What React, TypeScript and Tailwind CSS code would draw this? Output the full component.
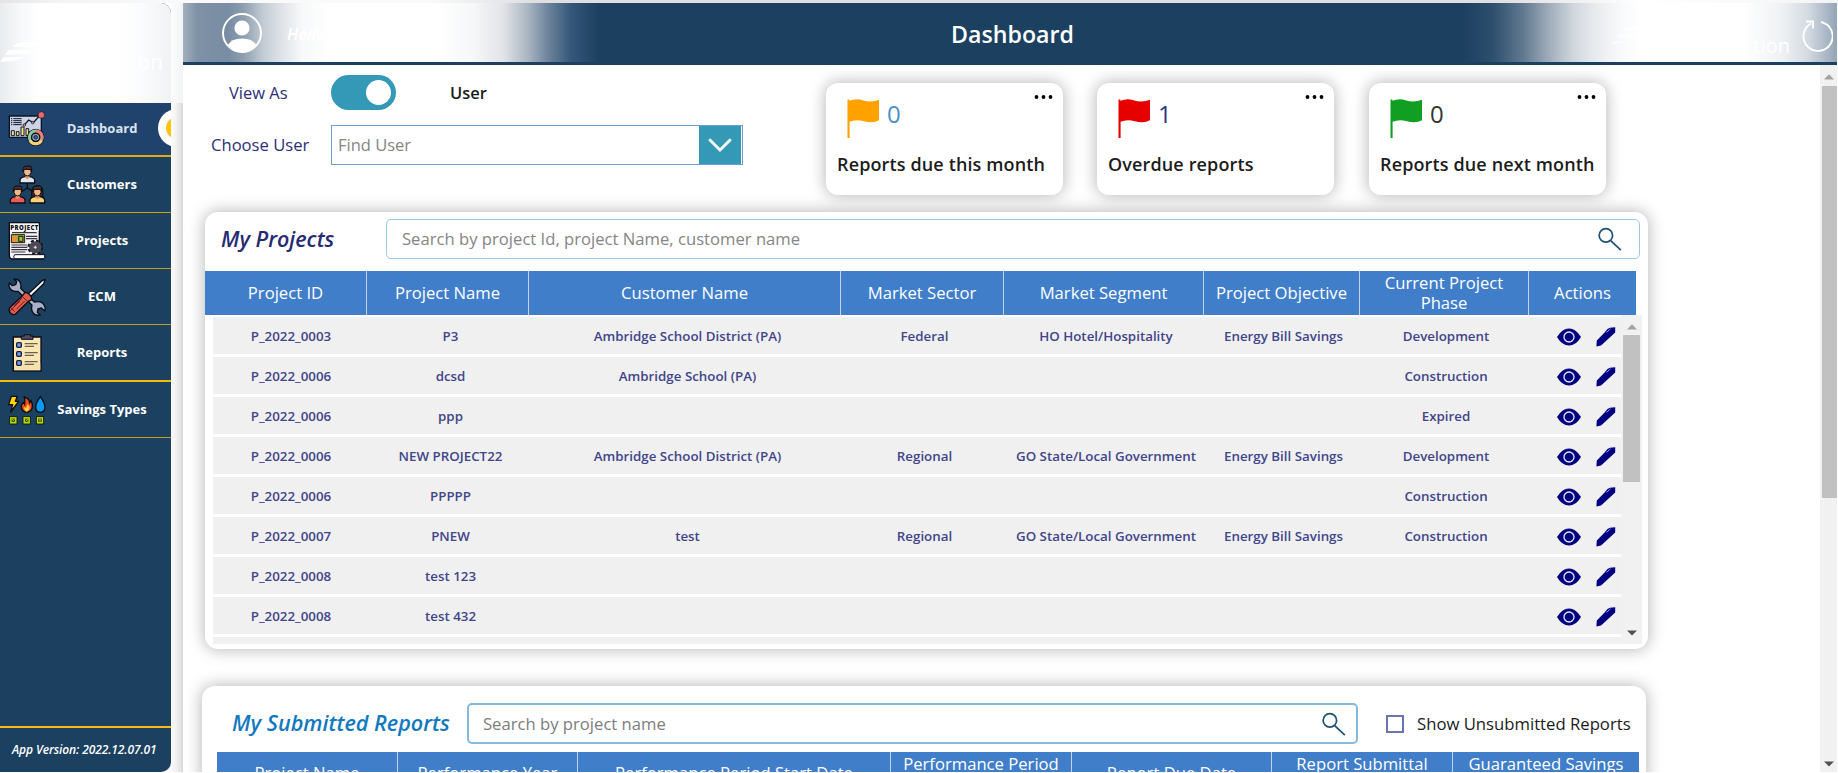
import React from "react";

const shadow = "shadow-[0_0_16px_1px_rgba(0,0,0,0.28)]";

function DashboardIcon() {
  return (
    <svg width="38" height="38" viewBox="24 28 114 114" className="shrink-0">
      <path d="M28 46H124V110H28Z" fill="#ccd4ea" stroke="#0d1420" strokeWidth="4" />
      <path d="M33 54H37M40 54H65M33 60H37M40 60H65M33 66H37M40 66H65M33 72H37M40 72H65" stroke="#111827" strokeWidth="3" />
      <path d="M72 74L86 58L100 66L118 46" fill="none" stroke="#0d1420" strokeWidth="4" />
      <circle cx="73" cy="73" r="4" fill="#e8807c" stroke="#0d1420" strokeWidth="2" />
      <circle cx="98" cy="66" r="4" fill="#e8807c" stroke="#0d1420" strokeWidth="2" />
      <circle cx="124" cy="43" r="10" fill="#e8686c" stroke="#0d1420" strokeWidth="2" />
      <path d="M34 90H43V105H34ZM49 93H57V105H49ZM63 79H72V105H63ZM78 84H86V105H78Z" fill="#ffe08a" stroke="#0d1420" strokeWidth="3" />
      <circle cx="107" cy="110" r="26" fill="#0d1420" />
      <circle cx="107" cy="110" r="19" fill="none" stroke="#8fc79a" strokeWidth="9" />
      <path d="M107 91A19 19 0 0 1 124 119" fill="none" stroke="#ea7d78" strokeWidth="9" />
      <path d="M124 119A19 19 0 0 1 90 119" fill="none" stroke="#f4d27a" strokeWidth="9" />
      <circle cx="107" cy="110" r="12" fill="#aab6d4" stroke="#0d1420" strokeWidth="4" />
      <circle cx="107" cy="110" r="6" fill="#33588c" stroke="#0d1420" strokeWidth="2" />
    </svg>
  );
}

function Person({ x, y, shirt, long }: { x: number; y: number; shirt: string; long?: boolean }) {
  return (
    <g transform={`translate(${x} ${y})`}>
      {long && <path d="M-17 38V18Q-17 0 0 0Q17 0 17 18V38Z" fill="#3a2430" stroke="#0d0d14" strokeWidth="3" />}
      <path d="M-22 52V44Q-22 36 -8 33H8Q22 36 22 44V52Z" fill={shirt} stroke="#0d0d14" strokeWidth="4" />
      <path d="M-6 26H6V36L0 41L-6 36Z" fill="#dd9a62" />
      <path d="M-11 10H11V20Q10 31 0 31Q-10 31 -11 20Z" fill="#f3b680" stroke="#0d0d14" strokeWidth="3" />
      <path d="M-13 18V8Q-12 1 0 1H10Q14 4 13 18L10 11H-9Z" fill="#4b2f38" stroke="#0d0d14" strokeWidth="3" />
    </g>
  );
}

function CustomersIcon() {
  return (
    <svg width="38" height="40" viewBox="24 195 114 120" className="shrink-0">
      <path d="M82 246V264M54 282L82 264L112 282" fill="none" stroke="#0d0d14" strokeWidth="4" />
      <Person x={82} y={197} shirt="#dbe6f5" />
      <Person x={53} y={257} shirt="#ee5a5a" />
      <Person x={112} y={257} shirt="#fbd27a" long />
    </svg>
  );
}

function ProjectsIcon() {
  return (
    <svg width="38" height="40" viewBox="24 362 114 120" className="shrink-0">
      <path d="M28 367H118V462H132Q136 470 131 476H36Q28 476 28 464Z" fill="#f6f3f8" stroke="#0d0d14" strokeWidth="4" />
      <path d="M30 373H116V391H30Z" fill="#fff" />
      <text x="73" y="390" textAnchor="middle" textLength="84" fontSize="18" fontWeight="800" fontFamily="Open Sans, sans-serif" fill="#0d0d14">PROJECT</text>
      <path d="M36 397H110M78 408H112M78 415H112M34 434H82M34 441H82M34 448H82M34 455H76" stroke="#3a3640" strokeWidth="3.5" />
      <path d="M34 403H74V427H34Z" fill="#b7ab3c" stroke="#1c1a10" strokeWidth="3" />
      <path d="M37 410H50V424H37Z" fill="#f08a3c" />
      <path d="M56 408H69V423H56Z" fill="#8cc63f" stroke="#1c1a10" strokeWidth="3" />
      <circle cx="106" cy="441" r="18" fill="none" stroke="#17151c" strokeWidth="11" strokeDasharray="8 6.1" />
      <circle cx="106" cy="441" r="12" fill="#fff" stroke="#4d4855" strokeWidth="13" />
      <circle cx="106" cy="441" r="5" fill="#e9e6ee" stroke="#17151c" strokeWidth="2" />
      <path d="M44 463H134V475H44Q38 470 44 463Z" fill="#fff" stroke="#17151c" strokeWidth="3" />
    </svg>
  );
}

function ToolsIcon() {
  return (
    <svg width="38" height="38" viewBox="24 535 114 114" className="shrink-0">
      <path
        d="M42 538Q62 538 63 558L62 566L103 607Q128 602 134 620Q137 628 134 634L124 625L114 628L112 638L121 646Q104 650 97 636Q93 628 96 617L54 575Q34 578 28 562Q26 554 28 550L37 558L47 555L50 546Z"
        fill="#a9b0c9" stroke="#0d0d14" strokeWidth="4" strokeLinejoin="round"
      />
      <path d="M135 539L128 542L84 583L91 591L131 552Z" fill="#f4f6fa" stroke="#0d0d14" strokeWidth="4" strokeLinejoin="round" />
      <path d="M75 578Q82 578 88 584Q96 592 95 600L84 606L46 644Q34 648 27 634L29 624L66 590Z" fill="#e25c4e" stroke="#0d0d14" strokeWidth="4" strokeLinejoin="round" />
      <path d="M66 590L84 606M34 625L44 636M42 618L66 596M50 628L74 604M30 634L60 604" stroke="#6d1f1c" strokeWidth="3" fill="none" />
    </svg>
  );
}

function ReportsIcon() {
  return (
    <svg width="38" height="38" viewBox="24 702 114 114" className="shrink-0">
      <path d="M40 711H123V813H40Z" fill="#fbe6b4" stroke="#0d0d14" strokeWidth="4" />
      <path d="M42 790H121V811H42Z" fill="#f3dca6" opacity="0.6" />
      <path d="M64 718V708H73V704H91V708H99V718Z" fill="#4f4a66" stroke="#0d0d14" strokeWidth="3" />
      {[735, 762, 789].map((y) => (
        <g key={y}>
          <rect x="50" y={y - 7} width="14" height="14" rx="3" fill="#6f9df0" stroke="#17203a" strokeWidth="4" />
          <path d={`M74 ${y - 4}H113M74 ${y + 4}H102`} stroke="#6a6252" strokeWidth="4" />
        </g>
      ))}
    </svg>
  );
}

function SavingsIcon() {
  return (
    <svg width="38" height="30" viewBox="24 883 114 90" className="shrink-0">
      <path d="M34 887H52L46 902H56L32 934L38 912H26Z" fill="#ffd500" stroke="#0d0d14" strokeWidth="4" strokeLinejoin="round" />
      <path d="M80 935Q63 932 64 915Q67 908 71 906L74 911Q75 896 73 889Q88 893 89 906L93 900Q98 910 97 918Q96 933 80 935Z" fill="#ff4a1c" stroke="#0d0d14" strokeWidth="4" />
      <path d="M80 933Q71 929 73 919L78 922L83 910Q91 918 88 926Q86 932 80 933Z" fill="#ffd23c" />
      <path d="M121 888Q135 908 135 920Q134 935 121 935Q108 935 107 920Q107 908 121 888Z" fill="#0a9cf5" stroke="#0d0d14" strokeWidth="4" />
      {[40, 80, 120].map((x) => (
        <g key={x}>
          <rect x={x - 11} y="948" width="22" height="22" fill="#b4dc00" stroke="#0d0d14" strokeWidth="2.5" />
          <rect x={x - 5} y="954" width="10" height="10" fill="#2a3306" />
          <path d={`M${x - 4} 955L${x + 4} 963M${x + 4} 955L${x - 4} 963`} stroke="#b4dc00" strokeWidth="2.5" />
        </g>
      ))}
    </svg>
  );
}

function Flag({ className }: { className: string }) {
  return (
    <svg width="33" height="40" viewBox="0 0 33 40" className={`shrink-0 ${className}`} fill="currentColor">
      <path d="M0.5 0.5H2.3V1.8Q9 -1 15.5 1.2Q24 4 32 0.8V21.3Q26 24.5 17 22.3Q9 19.8 2.6 22.8V39H0.5Z" />
    </svg>
  );
}

function SearchIcon() {
  return (
    <svg width="24" height="24" viewBox="0 0 25 25" fill="none" stroke="#1f5272" strokeWidth="1.8" className="shrink-0">
      <circle cx="8.2" cy="8.8" r="7" />
      <path d="M13.200 14.200L23.800 24.200" />
    </svg>
  );
}

function Eye() {
  return (
    <svg width="24" height="18" viewBox="0 0 24 18" className="shrink-0">
      <path d="M0 9Q5 0.4 12 0.4T24 9Q19 17.6 12 17.6T0 9Z" fill="#000080" />
      <circle cx="12" cy="9" r="5" fill="none" stroke="#e8e8f4" strokeWidth="1.3" />
    </svg>
  );
}

function Pencil() {
  return (
    <svg width="20" height="20" viewBox="0 0 20 20" className="shrink-0">
      <path d="M0.400 19.400L0.800 13.600L8.600 5.600L11.500 2L14 0.800L19.200 0.300V5.400L5 18.400Z" fill="#000080" />
      <path d="M10.400 5.400L14.600 2" stroke="#b9b9de" strokeWidth="0.8" />
    </svg>
  );
}

function ArrowUp() {
  return <svg width="10" height="6" viewBox="0 0 10 6"><path d="M0 5.4L5 0.2L10 5.4Z" fill="#a3a3a3" /></svg>;
}
function ArrowDown() {
  return <svg width="10" height="6" viewBox="0 0 10 6"><path d="M0 0.4H10L5 5.6Z" fill="#505050" /></svg>;
}

const nav = [
  { label: "Dashboard", icon: <DashboardIcon />, cls: "h-[54px] bg-[#20436d] border-b-2 border-[#e0ab12] text-[#dbe3f2]" },
  { label: "Customers", icon: <CustomersIcon />, cls: "h-[56px] border-b border-[#cda31a] text-white" },
  { label: "Projects", icon: <ProjectsIcon />, cls: "h-[56px] border-b border-[#c49d20] text-white" },
  { label: "ECM", icon: <ToolsIcon />, cls: "h-[56px] border-b border-[#c49d20] text-white" },
  { label: "Reports", icon: <ReportsIcon />, cls: "h-[57px] border-b-2 border-[#f5bb0c] text-white" },
  { label: "Savings Types", icon: <SavingsIcon />, cls: "h-[56px] border-b border-[#c49d20] text-white" },
];

function Sidebar() {
  return (
    <aside className="flex h-[769px] w-[171px] shrink-0 flex-col overflow-hidden rounded-r-[10px] bg-[#1c4060]">
      <div className="flex h-[100px] shrink-0 items-start justify-between bg-[linear-gradient(90deg,#e9ecee_0px,#f6f8f9_20px,#ffffff_40px,#ffffff_115px,#fbfcfd_140px,#f0f2f4_171px)] pr-2">
        <svg width="42" height="24" viewBox="0 0 42 24" className="mt-[38px]">
          <path d="M16 3Q24 0 40 1L34 6H12ZM8 9H38Q32 12 26 13L5 14ZM4 16H24Q18 20 0 21Z" fill="#fff" />
        </svg>
        <span className="mt-[45px] text-[21px] leading-[28px] text-white">tion</span>
      </div>
      {nav.map((n) => (
        <div key={n.label} className={`relative flex shrink-0 items-center pl-2 ${n.cls}`}>
          {n.icon}
          <span className="ml-[6px] w-[100px] text-center text-[13px] font-bold whitespace-nowrap">{n.label}</span>
          {n.label === "Dashboard" && (
            <span className="absolute top-[6px] left-[158px] flex size-[38px] items-center justify-center rounded-full bg-white">
              <span className="size-[22px] rounded-full bg-[#ffc20e]" />
            </span>
          )}
        </div>
      ))}
      <div className="mt-auto flex h-[46px] shrink-0 items-center border-t-2 border-[#fdb913] pl-[12px] text-[12px] font-semibold tracking-[-0.1px] whitespace-nowrap text-white italic">
        App Version: 2022.12.07.01
      </div>
    </aside>
  );
}

function Header() {
  return (
    <header className="flex h-[62px] shrink-0 items-center border-b-[3px] border-[#1c4060] bg-[linear-gradient(90deg,#a3b0bd_0px,#7f91a6_14px,#788ca3_45px,#8c9dae_60px,#c3ccd4_80px,#e3e7eb_102px,#f8f9fa_120px,#ffffff_150px,#ffffff_255px,#f5f7f8_290px,#e2e4e8_320px,#a9b5c1_345px,#6d849c_365px,#35577a_388px,#1c4060_416px,#1c4060_1280px,#2e4f6e_1310px,#60798f_1340px,#9dabb9_1365px,#cfd6dc_1390px,#e8ebee_1412px,#f9fafb_1440px,#ffffff_1460px,#ffffff_1560px,#eef1f3_1600px,#d3dae1_1625px,#93a4b6_1654px)]">
      <svg width="40" height="40" viewBox="0 0 40 40" className="mt-px ml-[39px] shrink-0">
        <circle cx="20" cy="20" r="19" fill="none" stroke="#fff" strokeWidth="1.9" />
        <circle cx="20" cy="15" r="7.6" fill="#fff" />
        <path d="M5.5 32.5Q9 25.5 20 25.5T34.500 32.500Q29 39 20 39T5.500 32.500Z" fill="#fff" />
      </svg>
      <span className="mt-[4px] ml-[25px] w-[180px] text-[16.5px] font-semibold text-white italic">Hello</span>
      <h1 className="mt-[3px] ml-[484px] w-[122px] text-[23.2px] leading-8 font-semibold whitespace-nowrap text-white">Dashboard</h1>
      <svg width="34" height="24" viewBox="0 0 34 24" className="mt-2 ml-[538px] shrink-0">
        <path d="M14 3Q20 0 32 1L26 6H10ZM8 9H30L22 13H5ZM2 16H24L0 20Z" fill="#fff" opacity="0.5" />
      </svg>
      <span className="mt-[26px] ml-[95px] w-[50px] shrink-0 text-right text-[20px] text-white">tion</span>
      <svg width="31" height="34" viewBox="0 0 31 34" fill="none" stroke="#fff" strokeWidth="1.9" className="mt-[6px] ml-[12px] shrink-0">
        <path d="M19 3A14.600 14.600 0 1 1 9 4.500M4 2.500H11V9.500" />
      </svg>
    </header>
  );
}

function StatCard({ flag, value, valueCls, label, cls }: { flag: string; value: string; valueCls: string; label: string; cls: string }) {
  return (
    <div className={`flex h-[112px] w-[237px] shrink-0 flex-col rounded-[12px] bg-white pl-[11px] ${shadow} ${cls}`}>
      <div className="flex h-[70px] items-start pr-[10px]">
        <Flag className={`mt-[16px] ml-[10px] ${flag}`} />
        <span className={`mt-[14px] ml-[7px] text-[24px] leading-[33px] font-medium ${valueCls}`}>{value}</span>
        <svg width="19" height="4" viewBox="0 0 19 4" className="mt-[12px] ml-auto">
          <circle cx="2.500" cy="2" r="1.900" /><circle cx="9.500" cy="2" r="1.900" /><circle cx="16.500" cy="2" r="1.900" />
        </svg>
      </div>
      <span className="text-[18px] leading-[23px] font-semibold tracking-[0.13px] whitespace-nowrap text-[#1c1c1c]">{label}</span>
    </div>
  );
}

const projects = [
  ["P_2022_0003", "P3", "Ambridge School District (PA)", "Federal", "HO Hotel/Hospitality", "Energy Bill Savings", "Development"],
  ["P_2022_0006", "dcsd", "Ambridge School (PA)", "", "", "", "Construction"],
  ["P_2022_0006", "ppp", "", "", "", "", "Expired"],
  ["P_2022_0006", "NEW PROJECT22", "Ambridge School District (PA)", "Regional", "GO State/Local Government", "Energy Bill Savings", "Development"],
  ["P_2022_0006", "PPPPP", "", "", "", "", "Construction"],
  ["P_2022_0007", "PNEW", "test", "Regional", "GO State/Local Government", "Energy Bill Savings", "Construction"],
  ["P_2022_0008", "test 123", "", "", "", "", ""],
  ["P_2022_0008", "test 432", "", "", "", "", ""],
];

const projectCols: [string, string][] = [
  ["Project ID", "w-[162px]"],
  ["Project Name", "w-[162px]"],
  ["Customer Name", "w-[312px]"],
  ["Market Sector", "w-[163px]"],
  ["Market Segment", "w-[200px]"],
  ["Project Objective", "w-[156px]"],
  ["Current Project Phase", "w-[169px] px-4"],
  ["Actions", "w-[107px]"],
];
const cellCols = ["w-[156px]", "w-[163px]", "w-[311px]", "w-[163px]", "w-[200px]", "w-[155px]", "w-[170px]"];

function MyProjects() {
  return (
    <section className={`ml-[22px] flex h-[437px] w-[1443px] shrink-0 flex-col rounded-[13px] bg-white ${shadow}`}>
      <div className="flex h-[59px] shrink-0 pt-[7px]">
        <h2 className="ml-[16px] w-[165px] text-[21.5px] leading-[39px] font-semibold whitespace-nowrap text-[#262a72] italic">My Projects</h2>
        <div className="flex h-[40px] w-[1254px] items-center justify-between rounded-[5px] border border-[#9cc9e6] pr-[17px] pl-[15px]">
          <span className="text-[16.65px] leading-[38px] text-[#858585]">Search by project Id, project Name, customer name</span>
          <SearchIcon />
        </div>
      </div>
      <div className="flex h-[44px] w-[1431px] shrink-0 bg-[#407ec9] text-[16.65px] leading-5 text-white">
        {projectCols.map(([c, w], i) => (
          <div key={c} className={`flex shrink-0 items-center justify-center text-center ${i < 7 ? "border-r border-[#c3d3ea]" : ""} ${w}`}>{c}</div>
        ))}
      </div>
      <div className="ml-2 flex h-[329px] w-[1429px] overflow-hidden">
        <div className="flex w-[1408px] shrink-0 flex-col gap-[3px] pt-[2px] text-[13.33px] font-semibold text-[#41458a]">
          {projects.map((row, r) => (
            <div key={r} className="flex h-[37px] shrink-0 items-center bg-[#f0f0f0] pt-[2px]">
              {row.map((c, i) => (
                <span key={i} className={`shrink-0 text-center whitespace-nowrap ${cellCols[i]}`}>{c}</span>
              ))}
              <div className="flex items-center gap-[15px] pl-[26px]">
                <Eye />
                <Pencil />
              </div>
            </div>
          ))}
          <div className="h-[37px] shrink-0 bg-[#f0f0f0]" />
        </div>
        <div className="flex w-[21px] flex-col items-center bg-[#f1f1f1] pt-[9px] pb-[8px]">
          <ArrowUp />
          <div className="mt-[5px] h-[147px] w-[17px] bg-[#c1c1c1]" />
          <div className="mt-auto"><ArrowDown /></div>
        </div>
      </div>
    </section>
  );
}

const reportCols: [string, string][] = [
  ["Project Name", "w-[181px] pt-[11px]"],
  ["Performance Year", "w-[180px] pt-[11px]"],
  ["Performance Period Start Date", "w-[313px] pt-[11px]"],
  ["Performance Period", "w-[181px] pt-[2px]"],
  ["Report Due Date", "w-[200px] pt-[11px]"],
  ["Report Submittal", "w-[181px] pt-[2px]"],
  ["Guaranteed Savings", "w-[186px] pt-[2px]"],
];

function MyReports() {
  return (
    <section className={`mt-[37px] ml-[19px] flex h-[400px] w-[1444px] shrink-0 flex-col rounded-[13px] bg-white ${shadow}`}>
      <div className="flex h-[66px] shrink-0 pt-[17px]">
        <h2 className="ml-[30px] w-[235px] text-[21.6px] leading-[39px] font-semibold whitespace-nowrap text-[#1279bf] italic">My Submitted Reports</h2>
        <div className="flex h-[41px] w-[891px] items-center justify-between rounded-[5px] border-2 border-[#84b9de] pr-[10px] pl-[14px]">
          <span className="text-[16.65px] leading-[38px] text-[#7d7d7d]">Search by project name</span>
          <SearchIcon />
        </div>
        <span className="mt-[12px] ml-[28px] size-[18px] border-2 border-[#6a74b0]" />
        <span className="ml-[13px] text-[16.7px] leading-[41px] whitespace-nowrap text-[#1b1b1b]">Show Unsubmitted Reports</span>
      </div>
      <div className="ml-[15px] flex h-[44px] w-[1422px] shrink-0 bg-[#407ec9] text-[16.65px] leading-5 text-white">
        {reportCols.map(([c, w], i) => (
          <div key={c} className={`shrink-0 text-center whitespace-nowrap ${i < 6 ? "border-r border-[#c3d3ea]" : ""} ${w}`}>{c}</div>
        ))}
      </div>
    </section>
  );
}

export default function App() {
  return (
    <div className="h-[773px] w-[1838px] overflow-hidden bg-white font-['Open_Sans',sans-serif]">
      <div className="h-[3px] bg-[linear-gradient(90deg,#e4e4e4_0px,#f4f4f4_60px,#fafafa_200px,#fafafa_430px,#e0dfe2_530px,#e0dfe2_1500px,#f6f6f6_1600px,#ffffff_1640px,#f4f4f4_1838px)]" />
      <div className="flex h-[769px]">
        <Sidebar />
        <div className="flex w-[12px] shrink-0 flex-col">
          <div className="h-[100px] bg-[linear-gradient(90deg,#fdfdfd,#f2f3f4)]" />
          <div className="grow bg-[linear-gradient(90deg,#fafafa,#f0f0f0_50%,#d9d9d9)]" />
        </div>
        <div className="flex w-[1654px] shrink-0 flex-col bg-white">
          <Header />
          <div className="flex h-[707px] overflow-hidden">
            <main className="flex w-[1637px] shrink-0 flex-col">
              <div className="flex h-[147px] shrink-0">
                <div className="w-[643px] shrink-0 pt-[10px]">
                  <div className="flex h-[35px] items-center">
                    <span className="ml-[46px] w-[102px] text-[16.5px] leading-[34px] text-[#2b2e76]">View As</span>
                    <span className="flex h-[35px] w-[65px] items-center justify-end rounded-full bg-[#3499b7] pr-[5px]">
                      <span className="size-[25px] rounded-full bg-white" />
                    </span>
                    <span className="ml-[54px] text-[16.5px] leading-[34px] font-semibold text-[#1a1a1a]">User</span>
                  </div>
                  <div className="mt-[15px] flex h-[40px] items-center">
                    <span className="ml-[28px] w-[120px] text-[16.6px] leading-[38px] text-[#2b2e76]">Choose User</span>
                    <div className="flex h-[40px] w-[412px] items-center border border-[#6f9bd3] pl-[6px]">
                      <span className="grow text-[16.5px] leading-[38px] text-[#858585]">Find User</span>
                      <span className="mr-px flex h-[38px] w-[42px] items-center justify-center bg-[#3499b7]">
                        <svg width="24" height="14" viewBox="0 0 24 14" fill="none" stroke="#fff" strokeWidth="2.800"><path d="M1.200 1.200L12 12L22.800 1.200" /></svg>
                      </span>
                    </div>
                  </div>
                </div>
                <div className="flex pt-[18px]">
                  <StatCard flag="text-[#ffa200]" value="0" valueCls="text-[#4a8fc8]" label="Reports due this month" cls="" />
                  <StatCard flag="text-[#e60000]" value="1" valueCls="text-[#2f3180]" label="Overdue reports" cls="ml-[34px]" />
                  <StatCard flag="text-[#109f22]" value="0" valueCls="text-[#333]" label="Reports due next month" cls="ml-[35px]" />
                </div>
              </div>
              <MyProjects />
              <MyReports />
            </main>
            <div className="flex w-[17px] shrink-0 flex-col items-center bg-[#f1f1f1] pt-[9px] pb-[5px]">
              <ArrowUp />
              <div className="mt-[6px] h-[412px] w-[15px] self-end bg-[#c1c1c1]" />
              <div className="mt-auto"><ArrowDown /></div>
            </div>
          </div>
        </div>
      </div>
    </div>
  );
}
